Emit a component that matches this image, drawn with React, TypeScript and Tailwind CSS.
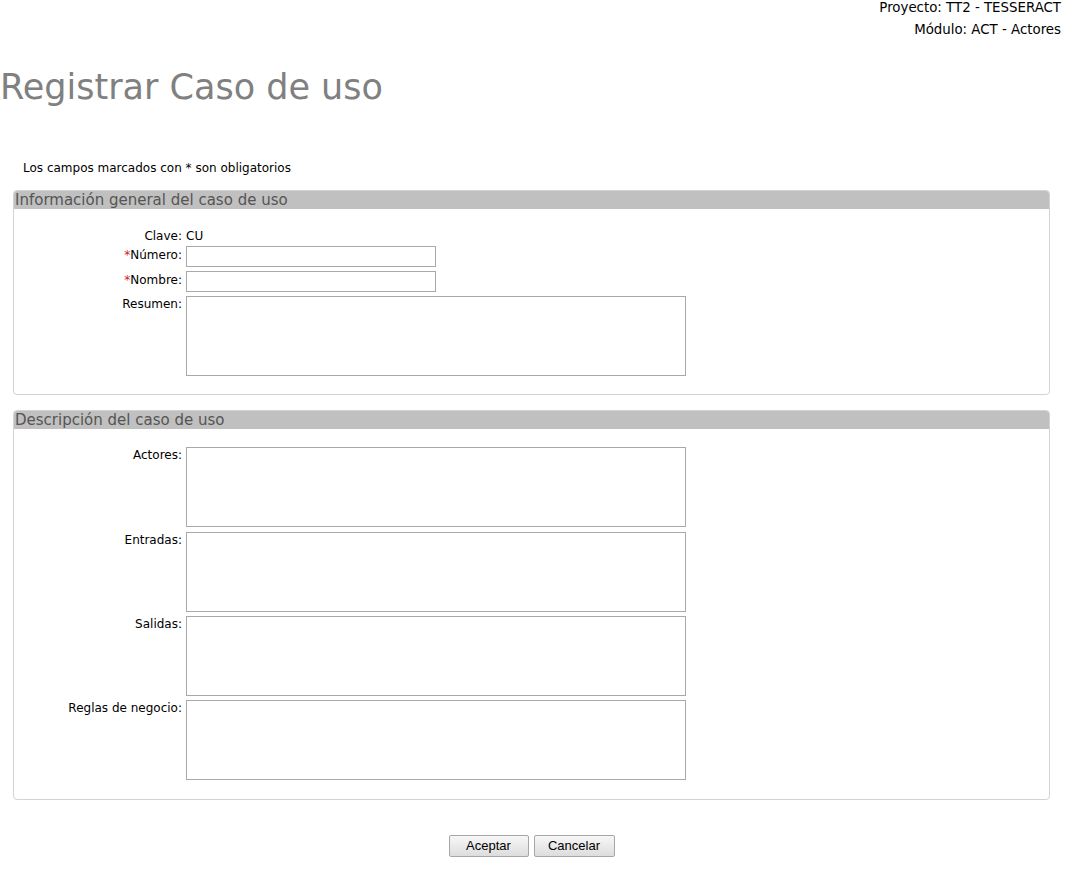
import React from "react";

const font = { fontFamily: '"DejaVu Sans", Verdana, sans-serif' };

function Label({ children, req, pt }: { children: React.ReactNode; req?: boolean; pt?: string }) {
  return (
    <div className={`text-right text-[12px] leading-[15px] text-black ${pt ?? "pt-[1px]"}`}>
      {req && <span className="text-[#d42020]">*</span>}
      {children}
    </div>
  );
}

function Panel({ title, children, pb }: { title: string; children: React.ReactNode; pb: string }) {
  return (
    <div className="ml-[13px] w-[1037px] rounded-[4px] border border-[#d3d3d3] overflow-hidden">
      <div className="h-[18px] bg-[#c0c0c0] pl-[1px] pt-[1px] text-[15px] leading-[17px] text-[#555555]">{title}</div>
      <div className={`pt-[18px] ${pb}`}>{children}</div>
    </div>
  );
}

const ta = "block h-[80px] w-[500px] resize-none border border-[#a9a9a9] bg-white outline-none";
const inp = "h-[21px] w-[250px] border border-[#a9a9a9] bg-white outline-none";

export default function App() {
  return (
    <div className="min-h-[870px] w-[1072px] bg-white" style={font}>
      <div className="flex flex-col items-end gap-[7px] pr-[11px] text-[13.35px] leading-[15px] text-black">
        <div>Proyecto: TT2 - TESSERACT</div>
        <div>Módulo: ACT - Actores</div>
      </div>
      <h1 className="mt-[30px] text-[35px] leading-[40px] text-[#808080]">Registrar Caso de uso</h1>
      <p className="mt-[54px] pl-[23px] text-[12px] leading-[15px] text-black">
        Los campos marcados con * son obligatorios
      </p>
      <div className="mt-[14px]">
        <Panel title="Información general del caso de uso" pb="pb-[18px]">
          <div className="grid grid-cols-[168px_auto] gap-x-[4px] justify-start">
            <Label pt="pt-[2px]">Clave:</Label>
            <div className="pt-[2px] text-[12px] leading-[15px] text-black">CU</div>
            <div className="col-span-2 h-[2px]" />
            <Label req pt="pt-[2px]">Número:</Label>
            <input className={inp} />
            <div className="col-span-2 h-[4px]" />
            <Label req pt="pt-[2px]">Nombre:</Label>
            <input className={inp} />
            <div className="col-span-2 h-[4px]" />
            <Label>Resumen:</Label>
            <textarea className={ta} />
          </div>
        </Panel>
      </div>
      <div className="mt-[15px]">
        <Panel title="Descripción del caso de uso" pb="pb-[19px]">
          <div className="grid grid-cols-[168px_auto] gap-x-[4px] justify-start">
            <Label>Actores:</Label>
            <textarea className={ta} />
            <div className="col-span-2 h-[5px]" />
            <Label>Entradas:</Label>
            <textarea className={ta} />
            <div className="col-span-2 h-[4px]" />
            <Label>Salidas:</Label>
            <textarea className={ta} />
            <div className="col-span-2 h-[4px]" />
            <Label>Reglas de negocio:</Label>
            <textarea className={ta} />
          </div>
        </Panel>
      </div>
      <div
        className="mt-[35px] flex justify-center gap-[5px] pr-[9px]"
        style={{ fontFamily: '"Liberation Sans", Arial, sans-serif' }}
      >
        <button className="h-[22px] w-[80px] rounded-[2px] border border-[#a6a6a6] bg-gradient-to-b from-[#f7f7f7] to-[#dddddd] text-[13px] leading-[20px] text-black">
          Aceptar
        </button>
        <button className="h-[22px] w-[81px] rounded-[2px] border border-[#a6a6a6] bg-gradient-to-b from-[#f7f7f7] to-[#dddddd] text-[13px] leading-[20px] text-black">
          Cancelar
        </button>
      </div>
    </div>
  );
}
